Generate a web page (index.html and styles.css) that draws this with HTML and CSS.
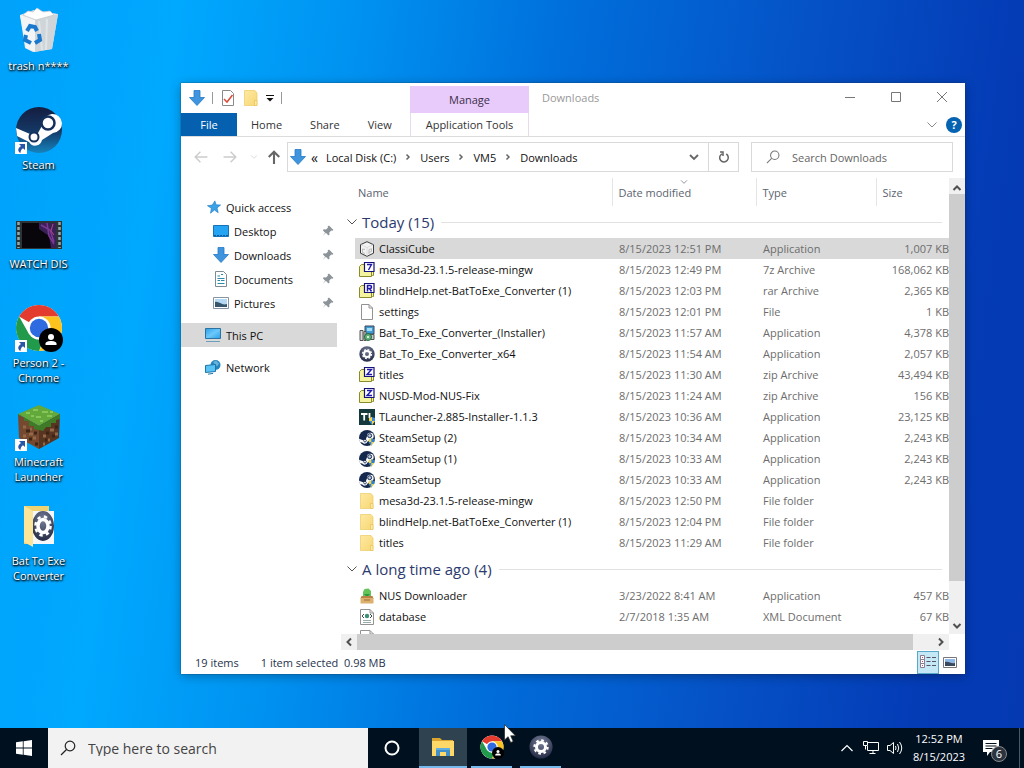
FILE: index.html
```html
<!DOCTYPE html>
<html lang="en">

<head>
    <meta charset="UTF-8">
    <meta name="viewport" content="width=device-width, initial-scale=1.0">
    <title>Downloads</title>
    <link rel="stylesheet" href="styles.css">
</head>

<body>
    <!-- shared icons -->
    <svg class="sprite" aria-hidden="true">
        <defs>
            <linearGradient id="steamFill" x1="0" y1="0" x2="0" y2="1">
                <stop offset="0" stop-color="#141d40" />
                <stop offset="0.5" stop-color="#143763" />
                <stop offset="1" stop-color="#1583bd" />
            </linearGradient>
            <linearGradient id="folderFill" x1="0" y1="0" x2="1" y2="1">
                <stop offset="0" stop-color="#ffe9a2" />
                <stop offset="1" stop-color="#f7d774" />
            </linearGradient>
            <radialGradient id="gearFill" cx="0.5" cy="0.3" r="0.7">
                <stop offset="0" stop-color="#78809a" />
                <stop offset="1" stop-color="#252b45" />
            </radialGradient>
            <linearGradient id="screenFill" x1="0" y1="0" x2="1" y2="1">
                <stop offset="0" stop-color="#2a9fe8" />
                <stop offset="0.5" stop-color="#6cc8fa" />
                <stop offset="1" stop-color="#2a9fe8" />
            </linearGradient>
        </defs>
        <symbol id="arrow-blue" viewBox="0 0 16 16">
            <path d="M5 0.5h6v7h4.5L8 15.5 0.5 7.5H5z" fill="#3e95de" stroke="#2579c4" stroke-width="0.8" />
        </symbol>
        <symbol id="folder" viewBox="0 0 16 16">
            <path d="M1.500 0.500H12l2 2.500V15.500H1.500z" fill="url(#folderFill)" stroke="#ecca62" stroke-width="0.7" />
            <path d="M11.500 10.500h2.500v5h-2.500z" fill="#ffe9a2" stroke="#e2bc50" stroke-width="0.600" />
        </symbol>
        <symbol id="file" viewBox="0 0 16 16">
            <path d="M2.500 0.500h7.500l3.500 3.500v11.500h-11z" fill="#fff" stroke="#929292" />
            <path d="M10 0.500V4h3.500" fill="none" stroke="#929292" />
        </symbol>
        <symbol id="xml" viewBox="0 0 16 16">
            <path d="M1.500 0.500h9.500l3.500 3.500v11.500h-13z" fill="#fff" stroke="#929292" />
            <path d="M11 0.500V4h3.500" fill="none" stroke="#929292" />
            <path d="M5 5L3 7l2 2M11 5l2 2-2 2" fill="none" stroke="#444" />
            <circle cx="8" cy="7" r="2.200" fill="#3a8f78" />
            <path d="M4 11.500h8M4 13.500h8" stroke="#9aa" />
        </symbol>
        <symbol id="archive" viewBox="0 0 16 16">
            <path d="M0.500 4.500l2-2h4v3h8v8h-1l-1 1h-12z" fill="#f4f3a0" stroke="#8b8a2c" />
            <path d="M12.500 6v8" stroke="#8b8a2c" />
            <path d="M5.500 0.500h9.500v9H5.500z" fill="#fff" stroke="#16127c" stroke-width="1.200" />
        </symbol>
        <symbol id="archive-z" viewBox="0 0 16 16">
            <use href="#archive" />
            <path d="M8 2.500h4.500L8 7.500h5" fill="none" stroke="#2019a8" stroke-width="1.400" />
        </symbol>
        <symbol id="archive-7" viewBox="0 0 16 16">
            <use href="#archive" />
            <path d="M8 2.500h4.500L9.500 8" fill="none" stroke="#2019a8" stroke-width="1.400" />
        </symbol>
        <symbol id="archive-r" viewBox="0 0 16 16">
            <use href="#archive" />
            <path d="M8.500 8.500v-6h2.500a1.500 1.500 0 0 1 0 3H8.500M10.500 5.500l2 3" fill="none" stroke="#2019a8" stroke-width="1.500" />
        </symbol>
        <symbol id="cube" viewBox="0 0 16 16">
            <path d="M8 0.700l6.500 3v8.500L8 15.300l-6.500-3.100V3.700z" fill="#f2f2f2" stroke="#3c3c3c" />
            <path d="M2 4l6 2.500L14 4M8 6.500V15" fill="none" stroke="#d8d8d8" stroke-width="0.800" />
            <path d="M6 8.500L3.500 8v3.500l2.500 1M10 13V8.500l2.500-.7v2.700L10 11.300" fill="none" stroke="#bbb" />
        </symbol>
        <symbol id="installer" viewBox="0 0 16 16">
            <path d="M6 1h9v8H6z" fill="#3d9bd8" stroke="#445" />
            <path d="M8 3h5v3H8z" fill="#a7dcf5" />
            <path d="M10 9.500h5v5h-3z" fill="#c8c8c8" stroke="#555" />
            <path d="M1 5.500h3v10H1zM5 6.500h2v9H5z" fill="#d8d8d8" stroke="#555" />
            <circle cx="9" cy="12" r="3.500" fill="#5fb27c" stroke="#29683d" />
            <circle cx="9" cy="12" r="1" fill="#fff" />
        </symbol>
        <symbol id="gear" viewBox="0 0 16 16">
            <circle cx="8" cy="8" r="7.700" fill="url(#gearFill)" />
            <circle cx="8" cy="8" r="3" fill="none" stroke="#fff" stroke-width="2" />
            <circle cx="8" cy="8" r="4.400" fill="none" stroke="#fff" stroke-width="1.500" stroke-dasharray="1.728 1.728" />
        </symbol>
        <symbol id="steam" viewBox="0 0 48 48">
            <circle cx="24" cy="24" r="23" fill="url(#steamFill)" />
            <path d="M1 22l14 6 8-1 5-9a9.500 9.500 0 1 1 10 9l-11 7a7 7 0 0 1-13 2L2 30z" fill="#fff" />
            <circle cx="33" cy="17" r="6.500" fill="#fff" stroke="#16305c" stroke-width="2.500" />
            <circle cx="19" cy="31" r="4.500" fill="#fff" stroke="#16305c" stroke-width="2" />
        </symbol>
        <symbol id="steam-setup" viewBox="0 0 48 48">
            <circle cx="24" cy="24" r="24" fill="#15294f" />
            <path d="M0 26l12 5 8-2 4-10a10 10 0 1 1 11 9l-10 7a8 8 0 0 1-14 3L2 35z" fill="#fff" />
            <circle cx="32" cy="17" r="6" fill="#b7c4d8" stroke="#15294f" stroke-width="3" />
            <circle cx="18" cy="32" r="4" fill="#fff" stroke="#15294f" stroke-width="2.500" />
            <path d="M29 28l8-3 9 3v8l-9 11-8-11z" fill="#e8d65c" />
            <path d="M37 25l9 3v8h-9zM29 36h8v11z" fill="#2f7ed0" />
        </symbol>
        <symbol id="tlauncher" viewBox="0 0 16 16">
            <path d="M0 0h16v16H0z" fill="#14393c" />
            <path d="M2 5h6.500M5.200 5v6.500M10.500 4v5" fill="none" stroke="#fff" stroke-width="1.800" />
            <path d="M10 9l3-1 3 1v3l-3 4-3-4z" fill="#3d8bd8" />
            <path d="M10 9l3-1v4h3l-3 4v-4h-3z" fill="#f6d34b" />
        </symbol>
        <symbol id="nus" viewBox="0 0 16 16">
            <path d="M5.500 1l4-.5L12 3v5H4V4z" fill="#63c559" />
            <path d="M5 6l3 3 3-3z" fill="#2f963a" />
            <path d="M2.500 8h11l1 2.500H1.500z" fill="#b98246" />
            <path d="M1.500 10h13v5.500h-13z" fill="#deb06e" />
            <path d="M5 12h6" stroke="#986a35" />
        </symbol>
        <symbol id="star" viewBox="0 0 16 16">
            <path d="M9 1l1.500 4.500 5 .2-4 3.300 1.300 5.500L8.500 11.500 4 15l1-5.500L0.500 6.500l5.500-.7z" fill="#3ca2e6" stroke="#1c7cc4" stroke-width="0.700" />
        </symbol>
        <symbol id="desktop" viewBox="0 0 16 16">
            <path d="M0.500 2.500h15v11H0.500z" fill="#25a4f3" stroke="#1773b8" />
            <path d="M1 12.500h14" stroke="#0b5d9c" stroke-dasharray="2 1" />
        </symbol>
        <symbol id="document" viewBox="0 0 16 16">
            <path d="M2.500 0.500h8l3 3v12h-11z" fill="#fff" stroke="#7c8b94" />
            <path d="M4.500 5H7M8 3.500h2M4.500 7.500h7M4.500 9.500H7M8 9.500h3.500M4.500 12.500h7" stroke="#2a8aa8" stroke-width="1.200" />
        </symbol>
        <symbol id="picture" viewBox="0 0 16 16">
            <path d="M0.500 2.500h15v11H0.500z" fill="#fff" stroke="#8795a0" />
            <path d="M2 4h12v8H2z" fill="#b4d9f4" />
            <path d="M2 7c4-1 7 4 12 2v3H2z" fill="#36576b" />
        </symbol>
        <symbol id="pc" viewBox="0 0 16 16">
            <path d="M0.500 1.500h15v10H0.500z" fill="url(#screenFill)" stroke="#2c719f" />
            <path d="M1 14.500h14" stroke="#6c9fbe" />
        </symbol>
        <symbol id="network" viewBox="0 0 16 16">
            <circle cx="10.500" cy="6" r="5" fill="#2785bd" />
            <path d="M8 3l3-1.500 3 3-2 3z" fill="#62b4da" />
            <path d="M0.500 6.500l10-1v7l-10 1z" fill="#58c3f4" stroke="#1d76aa" />
            <path d="M3 15.200l5-.8" stroke="#1d76aa" />
        </symbol>
        <symbol id="pin" viewBox="0 0 12 12">
            <path d="M7 0.500L11.500 5l-1.200.8-1-.3-2 2 .2 2-1 1-2.700-2.800L0.800 11l2.300-3.300L0.800 5.300l1-1 2.200.2 2-2-.3-1z" fill="#8d9499" />
        </symbol>
        <symbol id="chrome" viewBox="0 0 48 48">
            <circle cx="24" cy="24" r="23" fill="#fff" />
            <path d="M24 24L4.100 12.500A23 23 0 0 1 43.900 12.500H24z" fill="#e33b2e" />
            <path d="M24 12.500H43.900A23 23 0 0 1 24 47l10-17z" fill="#fcc31e" />
            <path d="M24 47A23 23 0 0 1 4.100 12.500L14 30l10 5.500 5-1z" fill="#229a4b" />
            <circle cx="24" cy="24" r="11.500" fill="#fff" />
            <circle cx="24" cy="24" r="9.200" fill="#2f6be0" />
            <circle cx="36" cy="36" r="12" fill="#000" />
            <circle cx="36" cy="33" r="3" fill="#fff" />
            <path d="M30.500 41v-1.500c0-3.500 11-3.500 11 0V41z" fill="#fff" />
        </symbol>
        <symbol id="shortcut" viewBox="0 0 12 12">
            <path d="M0 0h12v12H0z" fill="#fff" />
            <path d="M4 2h6v6L8 6.200C6 7.500 5.500 9 5.500 11 3 10 2 6.500 6 4z" fill="#2a57a5" />
        </symbol>
        <symbol id="chevron-down" viewBox="0 0 12 12">
            <path d="M1.500 3.500L6 8l4.500-4.500" fill="none" stroke="currentColor" />
        </symbol>
        <symbol id="chevron-right" viewBox="0 0 8 8">
            <path d="M2.500 1.500L5 4 2.500 6.500" fill="none" stroke="currentColor" stroke-width="1.500" />
        </symbol>
        <symbol id="arrow-left" viewBox="0 0 12 12">
            <path d="M11.500 6H1M5.500 1.500L1 6l4.500 4.500" fill="none" stroke="currentColor" stroke-width="1.200" />
        </symbol>
        <symbol id="loupe" viewBox="0 0 16 16">
            <circle cx="10" cy="6" r="4.800" fill="none" stroke="currentColor" stroke-width="1.200" />
            <path d="M6.500 9.500L1 15" stroke="currentColor" stroke-width="1.200" />
        </symbol>
    </svg>

    <main class="desktop">
        <nav class="desktop-icons" aria-label="Desktop">
            <a class="desktop-icon" href="#">
                <svg class="icon-large" viewBox="0 0 48 48">
                    <path d="M5 8l14-5 24 4-6 35-19 3-8-4z" fill="#e4e8eb" />
                    <path d="M5 8l14 5 24-6-6 35-17 3z" fill="#cfd5d9" />
                    <path d="M5 8l15 5v32l-9-4z" fill="#f2f4f5" />
                    <path d="M8 8l5-4 5 1 4-4 6 4 7-1 4 4-18 5z" fill="#fff" stroke="#c1c9ce" stroke-width="0.800" />
                    <path d="M24 14l3 29M32 12l-1 31" stroke="#dfe4e7" stroke-width="2" />
                    <path d="M12 24l3-5 5 1 2 4M24 27l1 6-5 3M16 36l-6-3 1-5" fill="none" stroke="#1b79cd" stroke-width="4" />
                </svg>
                <span>trash n****</span>
            </a>
            <a class="desktop-icon" href="#">
                <span class="icon-wrap">
                    <svg class="icon-large"><use href="#steam" /></svg>
                    <svg class="shortcut"><use href="#shortcut" /></svg>
                </span>
                <span>Steam</span>
            </a>
            <a class="desktop-icon" href="#">
                <svg class="icon-large" viewBox="0 -6 48 48">
                    <path d="M1 10h46v28H1z" fill="#2c3436" />
                    <path d="M3.500 11v26M44.500 11v26" stroke="#8bacb5" stroke-width="2.500" stroke-dasharray="3 2" />
                    <path d="M7 12h34v25H7z" fill="#08060a" />
                    <path d="M24 12h17v25h-5l-2-12-10-7z" fill="#392158" />
                    <path d="M26 14l9 5 4 12M32 12l2 13 5 8" fill="none" stroke="#7c3a96" stroke-width="1.500" />
                    <path d="M38 13l-2 7 3 4" fill="none" stroke="#b04a80" />
                </svg>
                <span>WATCH DIS</span>
            </a>
            <a class="desktop-icon" href="#">
                <span class="icon-wrap">
                    <svg class="icon-large"><use href="#chrome" /></svg>
                    <svg class="shortcut"><use href="#shortcut" /></svg>
                </span>
                <span>Person 2 - Chrome</span>
            </a>
            <a class="desktop-icon" href="#">
                <span class="icon-wrap">
                    <svg class="icon-large" viewBox="0 0 48 48">
                        <path d="M24 2l21 9-21 12L3 11z" fill="#62a83b" />
                        <path d="M3 11l21 12v23L4 35z" fill="#74492f" />
                        <path d="M45 11L24 23v23l20-11z" fill="#573520" />
                        <path d="M3 11l21 12 21-12v5l-4 1v3l-5 0v4l-5 0-3 4-4-1-5-1v-3l-5 0v-5l-5 0v-4l-5-1z" fill="#3f7b26" />
                        <path d="M11 10h4M18 7h5M27 9h6M21 14h5M32 13h5M16 13h3M25 18h3M35 9h3" stroke="#86c557" stroke-width="2" />
                        <path d="M8 24h3M14 31h4M18 35h3M8 33h3M15 26h2M28 33h3M35 27h4M33 37h2M40 31h3M28 41h2" stroke="#93694a" stroke-width="3" />
                        <path d="M11 28h4M19 30h3M14 36h3M20 41h3M31 30h3M37 33h3M30 37h2M40 24h3" stroke="#3d2416" stroke-width="3" />
                    </svg>
                    <svg class="shortcut"><use href="#shortcut" /></svg>
                </span>
                <span>Minecraft Launcher</span>
            </a>
            <a class="desktop-icon" href="#">
                <svg class="icon-large" viewBox="0 0 48 48">
                    <path d="M9 4h25v38H9z" fill="#f0d271" />
                    <path d="M18 9h21v33H18z" fill="#f5f7fb" />
                    <ellipse cx="28" cy="24" rx="11" ry="15" fill="url(#gearFill)" />
                    <ellipse cx="28" cy="24" rx="5" ry="6.500" fill="none" stroke="#fff" stroke-width="3.500" />
                    <ellipse cx="28" cy="24" rx="7.500" ry="9.500" fill="none" stroke="#fff" stroke-width="2.500" stroke-dasharray="3.400 3.400" />
                    <path d="M9 4l9 5v36l-9-5z" fill="#fbe59a" />
                </svg>
                <span>Bat To Exe Converter</span>
            </a>
        </nav>

        <section class="window" aria-label="Downloads">
            <header class="ribbon">
                <div class="quick-toolbar">
                    <svg class="icon"><use href="#arrow-blue" /></svg>
                    <span class="bar"></span>
                    <button type="button" aria-label="Properties">
                        <svg class="icon" viewBox="0 0 16 16">
                            <path d="M2.500 0.500h8l3 3v12h-11z" fill="#fff" stroke="#8a8a8a" />
                            <path d="M4 9l3 3 5.500-7" fill="none" stroke="#dc4b3a" stroke-width="1.500" />
                        </svg>
                    </button>
                    <button type="button" aria-label="New folder"><svg class="icon"><use href="#folder" /></svg></button>
                    <button type="button" aria-label="Customize toolbar">
                        <svg class="icon-tiny" viewBox="0 0 8 8"><path d="M0 1.500h8" stroke="#111" /><path d="M0.500 4h7L4 7.500z" fill="#111" /></svg>
                    </button>
                    <span class="bar"></span>
                </div>
                <div class="context-title">Manage</div>
                <div class="title-row">
                    <h1>Downloads</h1>
                    <div class="window-buttons">
                        <button type="button" aria-label="Minimize"><svg class="icon-small" viewBox="0 0 12 12"><path d="M1 6.500h10" stroke="#777" /></svg></button>
                        <button type="button" aria-label="Maximize"><svg class="icon-small" viewBox="0 0 12 12"><path d="M1.500 1.500h9v9h-9z" fill="none" stroke="#777" /></svg></button>
                        <button type="button" aria-label="Close"><svg class="icon-small" viewBox="0 0 12 12"><path d="M1 1l10 10M11 1L1 11" stroke="#777" /></svg></button>
                    </div>
                </div>
                <div class="tabs">
                    <button type="button" class="tab tab-file">File</button>
                    <button type="button" class="tab">Home</button>
                    <button type="button" class="tab">Share</button>
                    <button type="button" class="tab">View</button>
                </div>
                <button type="button" class="tab tab-context">Application Tools</button>
                <div class="ribbon-help">
                    <button type="button" aria-label="Expand ribbon"><svg class="icon-small"><use href="#chevron-down" /></svg></button>
                    <button type="button" class="help">?</button>
                </div>
            </header>

            <div class="address-row">
                <div class="history">
                    <button type="button" class="faded" aria-label="Back"><svg class="icon-arrow"><use href="#arrow-left" /></svg></button>
                    <button type="button" class="faded" aria-label="Forward"><svg class="icon-arrow flip"><use href="#arrow-left" /></svg></button>
                    <button type="button" class="faded narrow" aria-label="Recent"><svg class="icon-tiny"><use href="#chevron-down" /></svg></button>
                    <button type="button" class="narrow" aria-label="Up">
                        <svg class="icon-arrow" viewBox="0 0 12 12"><path d="M6 12V1.500M1.500 6L6 1.500 10.500 6" fill="none" stroke="#666" stroke-width="1.800" /></svg>
                    </button>
                </div>
                <div class="address">
                    <svg class="icon"><use href="#arrow-blue" /></svg>
                    <span class="overflow">«</span>
                    <a href="#">Local Disk (C:)</a>
                    <svg class="icon-tiny"><use href="#chevron-right" /></svg>
                    <a href="#">Users</a>
                    <svg class="icon-tiny"><use href="#chevron-right" /></svg>
                    <a href="#">VM5</a>
                    <svg class="icon-tiny"><use href="#chevron-right" /></svg>
                    <a href="#">Downloads</a>
                    <button type="button" class="previous" aria-label="Previous locations">
                        <svg class="icon-small" viewBox="0 0 12 12"><path d="M2 4l4 4 4-4" fill="none" stroke="#666" stroke-width="1.800" /></svg>
                    </button>
                    <button type="button" class="refresh" aria-label="Refresh">
                        <svg class="icon-small" viewBox="0 0 12 12"><path d="M8.300 3A4.300 4.300 0 1 1 4 2.800M2 1h3v4" fill="none" stroke="#666" stroke-width="1.500" /></svg>
                    </button>
                </div>
                <label class="search">
                    <svg class="icon-loupe"><use href="#loupe" /></svg>
                    <input type="search" placeholder="Search Downloads" aria-label="Search Downloads">
                </label>
            </div>

            <div class="panes">
                <nav class="sidebar" aria-label="Folders">
                    <a href="#"><svg class="icon-nav"><use href="#star" /></svg>Quick access</a>
                    <a class="child" href="#"><svg class="icon"><use href="#desktop" /></svg>Desktop<svg class="pin"><use href="#pin" /></svg></a>
                    <a class="child" href="#"><svg class="icon"><use href="#arrow-blue" /></svg>Downloads<svg class="pin"><use href="#pin" /></svg></a>
                    <a class="child" href="#"><svg class="icon"><use href="#document" /></svg>Documents<svg class="pin"><use href="#pin" /></svg></a>
                    <a class="child" href="#"><svg class="icon"><use href="#picture" /></svg>Pictures<svg class="pin"><use href="#pin" /></svg></a>
                    <a class="root current" href="#"><svg class="icon"><use href="#pc" /></svg>This PC</a>
                    <a class="root" href="#"><svg class="icon"><use href="#network" /></svg>Network</a>
                </nav>

                <div class="listing">
                    <div class="files">
                        <table>
                            <colgroup>
                                <col class="col-name">
                                <col class="col-date">
                                <col class="col-type">
                                <col>
                            </colgroup>
                            <thead>
                                <tr>
                                    <th scope="col">Name</th>
                                    <th scope="col" class="sorted">Date modified<svg class="sort-mark icon-tiny"><use href="#chevron-down" /></svg></th>
                                    <th scope="col">Type</th>
                                    <th scope="col">Size</th>
                                </tr>
                            </thead>
                            <tbody>
                                <tr class="group">
                                    <th colspan="4" scope="rowgroup"><div><svg class="icon-small"><use href="#chevron-down" /></svg>Today (15)</div></th>
                                </tr>
                                <tr class="selected"><td><svg class="icon"><use href="#cube" /></svg>ClassiCube</td><td>8/15/2023 12:51 PM</td><td>Application</td><td>1,007 KB</td></tr>
                                <tr><td><svg class="icon"><use href="#archive-7" /></svg>mesa3d-23.1.5-release-mingw</td><td>8/15/2023 12:49 PM</td><td>7z Archive</td><td>168,062 KB</td></tr>
                                <tr><td><svg class="icon"><use href="#archive-r" /></svg>blindHelp.net-BatToExe_Converter (1)</td><td>8/15/2023 12:03 PM</td><td>rar Archive</td><td>2,365 KB</td></tr>
                                <tr><td><svg class="icon"><use href="#file" /></svg>settings</td><td>8/15/2023 12:01 PM</td><td>File</td><td>1 KB</td></tr>
                                <tr><td><svg class="icon"><use href="#installer" /></svg>Bat_To_Exe_Converter_(Installer)</td><td>8/15/2023 11:57 AM</td><td>Application</td><td>4,378 KB</td></tr>
                                <tr><td><svg class="icon"><use href="#gear" /></svg>Bat_To_Exe_Converter_x64</td><td>8/15/2023 11:54 AM</td><td>Application</td><td>2,057 KB</td></tr>
                                <tr><td><svg class="icon"><use href="#archive-z" /></svg>titles</td><td>8/15/2023 11:30 AM</td><td>zip Archive</td><td>43,494 KB</td></tr>
                                <tr><td><svg class="icon"><use href="#archive-z" /></svg>NUSD-Mod-NUS-Fix</td><td>8/15/2023 11:24 AM</td><td>zip Archive</td><td>156 KB</td></tr>
                                <tr><td><svg class="icon"><use href="#tlauncher" /></svg>TLauncher-2.885-Installer-1.1.3</td><td>8/15/2023 10:36 AM</td><td>Application</td><td>23,125 KB</td></tr>
                                <tr><td><svg class="icon"><use href="#steam-setup" /></svg>SteamSetup (2)</td><td>8/15/2023 10:34 AM</td><td>Application</td><td>2,243 KB</td></tr>
                                <tr><td><svg class="icon"><use href="#steam-setup" /></svg>SteamSetup (1)</td><td>8/15/2023 10:33 AM</td><td>Application</td><td>2,243 KB</td></tr>
                                <tr><td><svg class="icon"><use href="#steam-setup" /></svg>SteamSetup</td><td>8/15/2023 10:33 AM</td><td>Application</td><td>2,243 KB</td></tr>
                                <tr><td><svg class="icon"><use href="#folder" /></svg>mesa3d-23.1.5-release-mingw</td><td>8/15/2023 12:50 PM</td><td>File folder</td><td></td></tr>
                                <tr><td><svg class="icon"><use href="#folder" /></svg>blindHelp.net-BatToExe_Converter (1)</td><td>8/15/2023 12:04 PM</td><td>File folder</td><td></td></tr>
                                <tr><td><svg class="icon"><use href="#folder" /></svg>titles</td><td>8/15/2023 11:29 AM</td><td>File folder</td><td></td></tr>
                            </tbody>
                            <tbody>
                                <tr class="group">
                                    <th colspan="4" scope="rowgroup"><div><svg class="icon-small"><use href="#chevron-down" /></svg>A long time ago (4)</div></th>
                                </tr>
                                <tr><td><svg class="icon"><use href="#nus" /></svg>NUS Downloader</td><td>3/23/2022 8:41 AM</td><td>Application</td><td>457 KB</td></tr>
                                <tr><td><svg class="icon"><use href="#xml" /></svg>database</td><td>2/7/2018 1:35 AM</td><td>XML Document</td><td>67 KB</td></tr>
                                <tr><td><svg class="icon"><use href="#xml" /></svg>dsidatabase</td><td>2/7/2018 1:33 AM</td><td>XML Document</td><td>4 KB</td></tr>
                            </tbody>
                        </table>
                    </div>
                    <div class="scroll-y" aria-hidden="true">
                        <svg class="icon-small" viewBox="0 0 12 12"><path d="M2.500 8L6 4.500 9.500 8" fill="none" stroke="#505050" stroke-width="2" /></svg>
                        <span class="thumb"></span>
                        <svg class="icon-small" viewBox="0 0 12 12"><path d="M2.500 4L6 7.500 9.500 4" fill="none" stroke="#505050" stroke-width="2" /></svg>
                    </div>
                    <div class="scroll-x" aria-hidden="true">
                        <svg class="icon-small" viewBox="0 0 12 12"><path d="M8 2.500L4.500 6 8 9.500" fill="none" stroke="#505050" stroke-width="2" /></svg>
                        <span class="thumb"></span>
                        <svg class="icon-small" viewBox="0 0 12 12"><path d="M4 2.500L7.500 6 4 9.500" fill="none" stroke="#505050" stroke-width="2" /></svg>
                    </div>
                </div>
            </div>

            <footer class="status">
                <span>19 items</span>
                <span>1 item selected&nbsp; 0.98 MB</span>
                <div class="views">
                    <button type="button" class="active" aria-label="Details">
                        <svg class="icon" viewBox="0 0 16 16">
                            <path d="M0.500 1.500h4v4h-4zM0.500 5.500h4v4h-4zM0.500 9.500h4v4h-4z" fill="#fff" stroke="#8d7d94" />
                            <path d="M2 3.500h1M2 7.500h1M2 11.500h1" stroke="#d04a4a" />
                            <path d="M6.500 3.500h4M12 3.500h4M6.500 7.500h4M12 7.500h4M6.500 11.500h4M12 11.500h4" stroke="#556" />
                        </svg>
                    </button>
                    <button type="button" aria-label="Large icons">
                        <svg class="icon" viewBox="0 0 16 16">
                            <path d="M1.500 3.500h13v10h-13z" fill="#fff" stroke="#777" />
                            <path d="M3 5h10v7H3z" fill="#8db8e8" />
                            <path d="M3 8c4-1 6 2 10 1v3H3z" fill="#39485c" />
                        </svg>
                    </button>
                </div>
            </footer>
        </section>
    </main>

    <footer class="taskbar">
        <button type="button" class="start" aria-label="Start">
            <svg class="icon" viewBox="0 0 16 16"><path d="M0 2.300L6.800 1.300v6.200H0zM7.600 1.200L16 0v7.500H7.600zM0 8.400h6.800v6.300L0 13.700zM7.600 8.400H16V16l-8.400-1.200z" fill="#fff" /></svg>
        </button>
        <label class="task-search">
            <svg class="icon"><use href="#loupe" /></svg>
            <input type="search" placeholder="Type here to search" aria-label="Type here to search">
        </label>
        <button type="button" class="cortana" aria-label="Cortana">
            <svg class="icon" viewBox="0 0 16 16"><circle cx="8" cy="8" r="6.500" fill="none" stroke="#fff" stroke-width="2" /></svg>
        </button>
        <button type="button" class="task open" aria-label="File Explorer">
            <svg class="icon-task" viewBox="0 0 24 24">
                <path d="M1 3h8l2 2h11v4H1z" fill="#dca52f" />
                <path d="M1 6h22v15H1z" fill="#ffd868" />
                <path d="M5 21v-8h14v8h-4v-4H9v4z" fill="#3f8fcb" />
                <path d="M5 13h14v2H5z" fill="#62aede" />
            </svg>
        </button>
        <button type="button" class="task" aria-label="Chrome"><svg class="icon-task"><use href="#chrome" /></svg></button>
        <button type="button" class="task" aria-label="Bat To Exe Converter"><svg class="icon-task"><use href="#gear" /></svg></button>

        <div class="tray">
            <button type="button" aria-label="Show hidden icons">
                <svg class="icon-small" viewBox="0 0 12 12"><path d="M0.500 9L6 3.500 11.500 9" fill="none" stroke="#fff" stroke-width="1.200" /></svg>
            </button>
            <button type="button" aria-label="Network">
                <svg class="icon" viewBox="0 0 16 16"><path d="M5 2.500h10.500v8H4.500V6M10 10.500v3M6.500 13.500h6M0.500 1.500h4v4h-4zM2.500 5.500v4" fill="none" stroke="#fff" /></svg>
            </button>
            <button type="button" aria-label="Volume">
                <svg class="icon" viewBox="0 0 16 16"><path d="M0.500 5.500h2.500l3.500-3v11l-3.500-3H0.500zM8.500 6q1 2 0 4M10.500 4q2.500 4 0 8M12.500 2q4.500 6 0 12" fill="none" stroke="#fff" /></svg>
            </button>
            <button type="button" class="clock">12:52 PM<br>8/15/2023</button>
            <button type="button" class="notifications" aria-label="6 notifications">
                <svg class="icon" viewBox="0 0 16 16"><path d="M0 0h16v12H7l-3 4v-4H0z" fill="#fff" /><path d="M2.500 3.500h11M2.500 6h11M2.500 8.500h7" stroke="#01101f" /></svg>
                <span class="badge">6</span>
            </button>
        </div>
    </footer>

    <svg class="cursor" viewBox="0 0 12 19" aria-hidden="true"><path d="M0.500 0.500v15.500l3.600-3.300 2.600 5.800 2.500-1.100-2.500-5.600h4.800z" fill="#fff" stroke="#222" stroke-width="0.700" /></svg>
</body>

</html>
```
FILE: styles.css
```css
* {
    box-sizing: border-box;
}

body {
    margin: 0;
    height: 100vh;
    display: flex;
    flex-direction: column;
    overflow: hidden;
    font-family: "Open Sans", "Noto Sans", sans-serif;
    font-size: 11px;
    line-height: 15px;
    color: #111;
}

a {
    color: inherit;
    text-decoration: none;
}

button {
    display: flex;
    align-items: center;
    justify-content: center;
    padding: 0;
    border: none;
    background: none;
    font: inherit;
    color: inherit;
}

input {
    flex: 1;
    min-width: 0;
    padding: 0;
    border: none;
    outline: none;
    background: none;
    font: inherit;
}

svg {
    display: block;
    flex: none;
}

.sprite {
    position: absolute;
    width: 0;
    height: 0;
}

.icon {
    width: 16px;
    height: 16px;
}

.icon-small,
.pin {
    width: 12px;
    height: 12px;
}

.icon-nav,
.icon-loupe,
.icon-arrow {
    width: 14px;
    height: 14px;
}

.icon-tiny {
    width: 8px;
    height: 8px;
}

.icon-task {
    width: 24px;
    height: 24px;
}

.icon-large {
    width: 48px;
    height: 48px;
}

/* Desktop */
.desktop {
    position: relative;
    flex: 1;
    min-height: 0;
    background: linear-gradient(98deg, #00a2fa 0%, #00a8fe 16%, #0092f0 32%, #0070dc 50%, #0552c6 72%, #043cb6 90%, #0439b2 100%);
}

.desktop-icons {
    display: grid;
    grid-auto-rows: 99px;
    width: 77px;
    padding-top: 7px;
}

.desktop-icon {
    display: flex;
    flex-direction: column;
    align-items: center;
    gap: 3px;
    color: #fff;
    text-align: center;
    text-shadow: 0 1px 2px #000, 1px 1px 2px #000;
}

.icon-wrap {
    position: relative;
}

.shortcut {
    position: absolute;
    left: 0;
    bottom: 0;
    width: 12px;
    height: 12px;
}

/* Explorer window */
.window {
    position: absolute;
    inset: 83px 59px 54px 181px;
    display: flex;
    flex-direction: column;
    background: #fff;
    box-shadow: 0 0 1px #234, 0 2px 10px rgba(0, 0, 0, 0.3);
}

.ribbon {
    display: grid;
    grid-template-columns: 229px 119px 1fr;
    grid-template-rows: 30px 23px;
    border-bottom: 1px solid #dcdcdc;
}

.quick-toolbar {
    display: flex;
    align-items: center;
    gap: 7px;
    padding-left: 8px;
}

.bar {
    width: 1px;
    height: 12px;
    background: #999;
}

.context-title {
    margin-top: 3px;
    padding-top: 6px;
    background: #e8cbfb;
    text-align: center;
    color: #3b2f4a;
}

.title-row {
    display: flex;
    align-items: center;
    justify-content: space-between;
    height: 28px;
    padding-left: 13px;
}

.title-row h1 {
    margin: 0;
    font-size: 11px;
    font-weight: normal;
    color: #999;
}

.window-buttons {
    display: flex;
}

.window-buttons button {
    width: 46px;
    height: 28px;
}

.tabs {
    display: flex;
}

.tab {
    padding: 0 14px;
    color: #333;
}

.tab-file {
    width: 56px;
    background: #0560b0;
    color: #fff;
}

.tab-context {
    padding: 0;
    border: solid #e6dcec;
    border-width: 0 1px;
}

.ribbon-help {
    display: flex;
    align-items: center;
    justify-content: flex-end;
    gap: 8px;
    padding-right: 3px;
    color: #888;
}

.help {
    width: 16px;
    height: 16px;
    border-radius: 50%;
    background: #0563b1;
    color: #fff;
    font-weight: bold;
}

.address-row {
    display: flex;
    gap: 3px;
    padding: 5px 12px 5px 5px;
}

.history {
    display: flex;
}

.history button {
    width: 29px;
}

.history .narrow {
    width: 20px;
}

.history .faded {
    color: #ccc;
}

.flip {
    transform: scaleX(-1);
}

.address {
    flex: 1;
    display: flex;
    align-items: center;
    gap: 8px;
    height: 30px;
    padding-left: 2px;
    border: 1px solid #d9d9d9;
    color: #111;
}

.address .icon-tiny {
    color: #666;
}

.overflow {
    margin-left: -3px;
    font-size: 14px;
}

.previous {
    margin-left: auto;
}

.refresh {
    align-self: stretch;
    width: 30px;
    border-left: 1px solid #d9d9d9;
}

.search {
    display: flex;
    align-items: center;
    gap: 12px;
    width: 202px;
    margin-left: 9px;
    padding-left: 14px;
    border: 1px solid #d9d9d9;
    color: #777;
}

input::placeholder {
    color: #666;
    opacity: 1;
}

.panes {
    flex: 1;
    display: flex;
    min-height: 0;
}

.sidebar {
    width: 156px;
    padding-top: 18px;
}

.sidebar a {
    display: flex;
    align-items: center;
    gap: 5px;
    height: 24px;
    padding-left: 26px;
}

.sidebar .child {
    padding-left: 32px;
}

.sidebar .root {
    margin-top: 8px;
    padding-left: 24px;
}

.sidebar .current {
    background: #d9d9d9;
}

.pin {
    margin: 0 3px 0 auto;
}

.listing {
    flex: 1;
    min-width: 0;
    display: grid;
    grid-template-columns: 1fr 16px;
    grid-template-rows: 1fr 16px;
    padding: 1px 0 0 4px;
}

.files {
    overflow: hidden;
    min-height: 0;
    padding-left: 14px;
}

table {
    width: 100%;
    table-layout: fixed;
    border-collapse: collapse;
}

.col-name {
    width: 257px;
}

.col-date {
    width: 144px;
}

.col-type {
    width: 120px;
}

th,
td {
    padding: 0;
    text-align: left;
    font-weight: normal;
    white-space: nowrap;
}

thead th {
    height: 28px;
    padding-left: 6px;
    border-left: 1px solid #e5e5e5;
    color: #5b6470;
}

thead th:first-child {
    padding-left: 3px;
    border-left: none;
}

.sorted {
    position: relative;
}

.sort-mark {
    position: absolute;
    top: 0;
    left: 47%;
}

.group th {
    height: 32px;
}

.group div {
    display: flex;
    align-items: center;
    gap: 4px;
    margin: 0 7px 0 -9px;
    font-size: 15px;
    color: #2c3a6e;
}

.group .icon-small {
    color: #555;
}

.group div::after {
    content: "";
    flex: 1;
    height: 1px;
    margin-left: 3px;
    background: #e2e2e2;
}

td {
    height: 21px;
    padding-left: 7px;
    color: #6d6d6d;
}

td:first-child {
    padding-left: 4px;
    color: #111;
}

td:last-child {
    padding-left: 0;
    text-align: right;
}

td .icon {
    display: inline-block;
    margin-right: 4px;
    vertical-align: -4px;
}

.selected td {
    background: #d9d9d9;
}

.scroll-y,
.scroll-x {
    display: flex;
    align-items: center;
    justify-content: space-between;
    background: #f0f0f0;
}

.scroll-y {
    flex-direction: column;
    padding: 4px 0 2px;
}

.scroll-x {
    padding: 0 2px;
}

.thumb {
    background: #cdcdcd;
}

.scroll-y .thumb {
    width: 100%;
    height: 86%;
    margin-bottom: auto;
}

.scroll-x .thumb {
    width: 92%;
    height: 100%;
    margin: 0 auto 0 2px;
}

.status {
    display: flex;
    align-items: center;
    gap: 22px;
    height: 24px;
    padding-left: 14px;
    color: #27334d;
}

.views {
    display: flex;
    margin-left: auto;
    padding-right: 4px;
}

.views button {
    width: 22px;
    height: 23px;
}

.views .active {
    border: 1px solid #5aa7c9;
    background: #c5e8f6;
}

/* Taskbar */
.taskbar {
    display: flex;
    height: 40px;
    background: #01101f;
    color: #fff;
}

.start,
.cortana {
    width: 48px;
}

.task-search {
    display: flex;
    align-items: center;
    gap: 12px;
    width: 320px;
    padding-left: 12px;
    background: #f2f2f2;
    color: #222;
    font-size: 14px;
}

.task-search input::placeholder {
    color: #444;
}

.cortana {
    margin-right: 3px;
}

.task {
    width: 41px;
    margin-left: 4px;
    border-bottom: 2px solid #76b9ed;
}

.task + .task + .task {
    margin-left: 8px;
}

.task.open {
    width: 48px;
    margin-left: 0;
    background: #2f424f;
}

.tray {
    display: flex;
    margin-left: auto;
    margin-right: 4px;
    padding-right: 8px;
    border-right: 1px solid #4a5868;
}

.tray button {
    width: 24px;
}

.tray .clock {
    width: 64px;
    line-height: 18px;
}

.tray .notifications {
    position: relative;
    width: 40px;
}

.badge {
    position: absolute;
    left: 20px;
    top: 18px;
    width: 16px;
    height: 16px;
    border: 1px solid #888;
    border-radius: 50%;
    background: #2c3440;
    line-height: 14px;
}

.cursor {
    position: absolute;
    left: 504px;
    top: 724px;
    width: 12px;
    height: 19px;
}
```
